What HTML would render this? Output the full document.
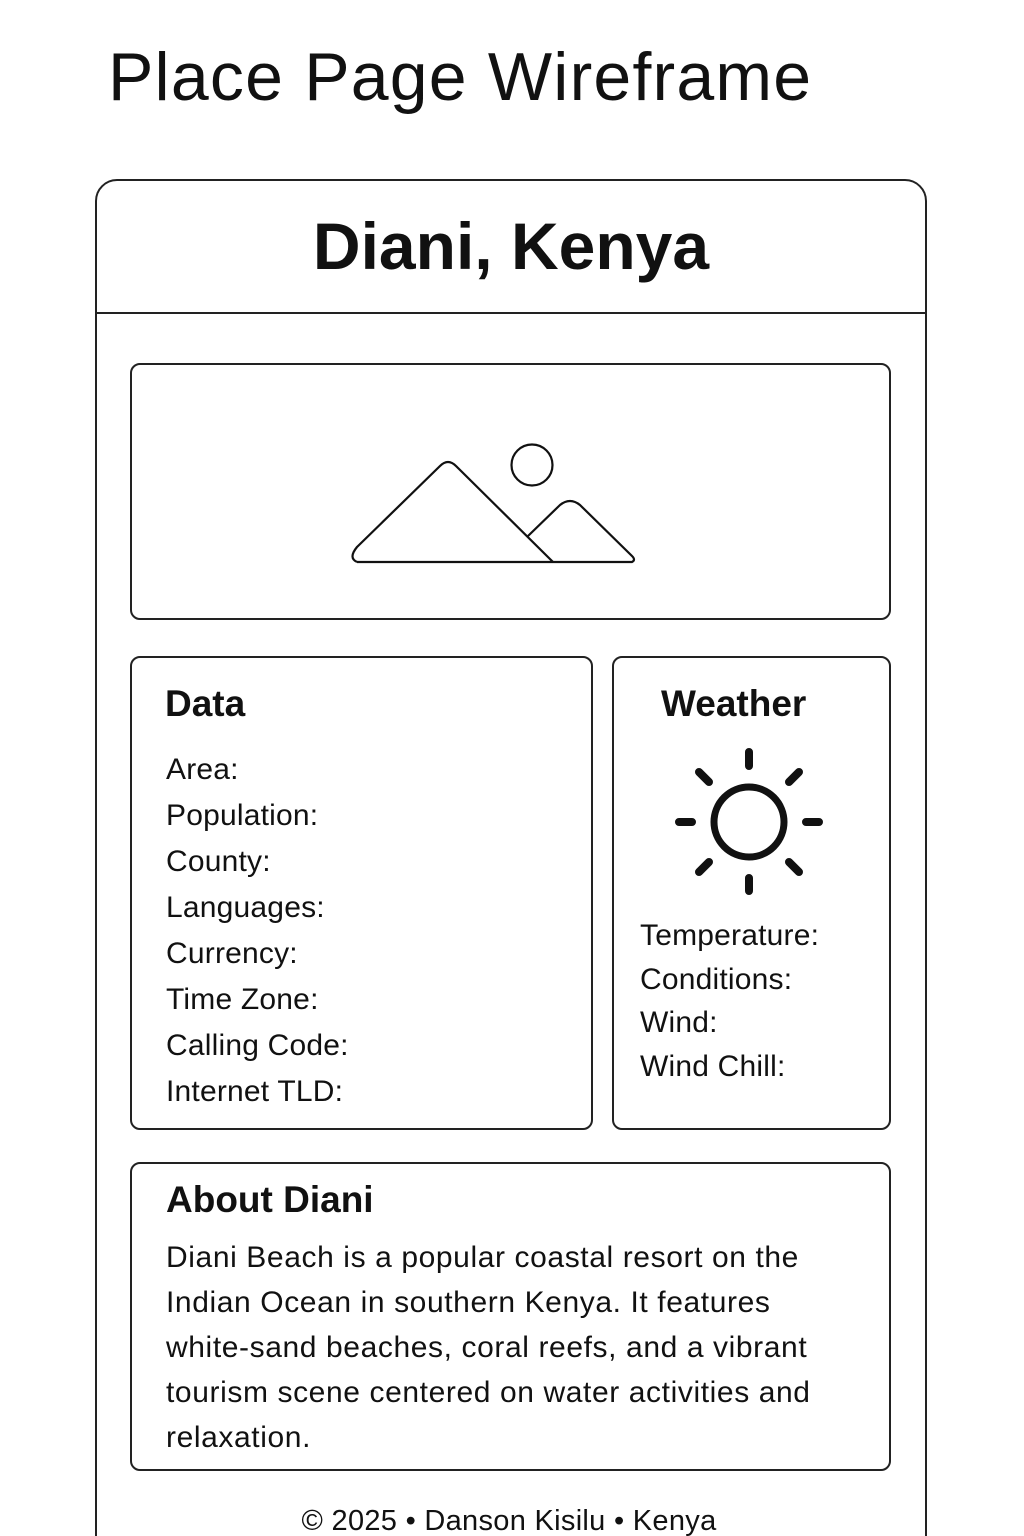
<!DOCTYPE html>
<html style="overflow:hidden;height:1536px"><head><style>
html,body{overflow:hidden}
body{margin:0;width:1024px;height:1536px;background:#fff;position:relative;font-family:"Liberation Sans",sans-serif;color:#111}
.a{position:absolute}
.box{position:absolute;border:2px solid #222;border-radius:10px;box-sizing:border-box}
.t{position:absolute;white-space:nowrap}
.lst div{height:46px;font-size:30px;letter-spacing:0.2px}
.wl div{height:43.5px;font-size:30px;letter-spacing:0.2px}
</style></head><body>
<div class="t" style="left:108px;top:38px;font-size:68px;letter-spacing:1.2px">Place Page Wireframe</div>
<div class="box" style="left:95px;top:179px;width:832px;height:1380px;border-radius:22px"></div>
<div class="a" style="left:96px;top:312px;width:830px;height:2px;background:#222"></div>
<div class="t" style="left:0;width:1022px;text-align:center;top:208px;font-size:66px;font-weight:bold">Diani, Kenya</div>
<div class="box" style="left:130px;top:363px;width:761px;height:257px"></div>
<svg class="a" style="left:330px;top:430px" width="320" height="150" viewBox="330 430 320 150" fill="none" stroke="#111" stroke-width="2.2" stroke-linejoin="round">
<circle cx="532" cy="465" r="20.5"/>
<path d="M357 562 L632 562 Q636 560 632 556 L580 505 Q570 497 560 505 L528 536"/>
<path d="M553 562 L456 466 Q448 458 440 466 L357 547 Q348 558 357 562"/>
</svg>
<div class="box" style="left:130px;top:656px;width:463px;height:474px"></div>
<div class="t" style="left:165px;top:683px;font-size:37px;font-weight:bold">Data</div>
<div class="a lst" style="left:166px;top:753px">
<div>Area:</div><div>Population:</div><div>County:</div><div>Languages:</div><div>Currency:</div><div>Time Zone:</div><div>Calling Code:</div><div>Internet TLD:</div></div>
<div class="box" style="left:612px;top:656px;width:279px;height:474px"></div>
<div class="t" style="left:661px;top:683px;font-size:37px;font-weight:bold">Weather</div>
<svg class="a" style="left:670px;top:742px" width="160" height="160" viewBox="670 742 160 160" stroke="#111" stroke-width="8" stroke-linecap="round" fill="none">
<circle cx="749" cy="822" r="35" stroke-width="7"/>
<path d="M749 752V766M749 878V891M679 822H692M806 822H819M699 772L709 782M799 772L789 782M699 872L709 862M799 872L789 862"/>
</svg>
<div class="a wl" style="left:640px;top:919px">
<div>Temperature:</div><div>Conditions:</div><div>Wind:</div><div>Wind Chill:</div></div>
<div class="box" style="left:130px;top:1162px;width:761px;height:309px"></div>
<div class="t" style="left:166px;top:1179px;font-size:37px;font-weight:bold">About Diani</div>
<div class="a" style="left:166px;top:1235px;width:720px;font-size:30px;letter-spacing:0.6px;line-height:45px;white-space:nowrap">Diani Beach is a popular coastal resort on the<br>Indian Ocean in southern Kenya. It features<br>white-sand beaches, coral reefs, and a vibrant<br>tourism scene centered on water activities and<br>relaxation.</div>
<div class="t" style="left:0;width:1018px;text-align:center;top:1505px;font-size:29px;letter-spacing:0.3px">© 2025 • Danson Kisilu • Kenya</div>
</body></html>
